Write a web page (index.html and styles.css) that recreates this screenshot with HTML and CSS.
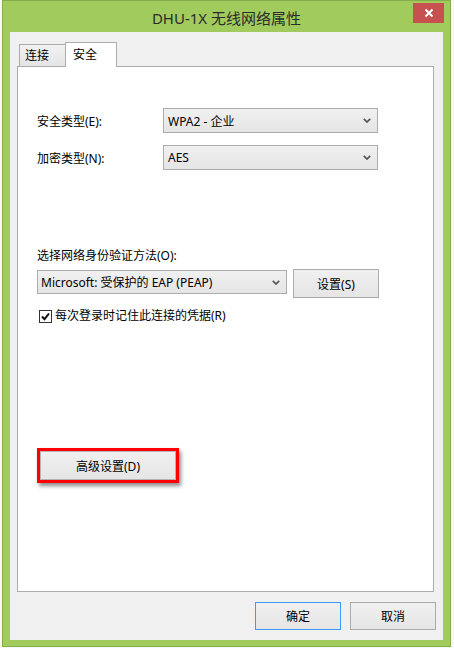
FILE: index.html
```html
<!DOCTYPE html>
<html lang="zh-CN">
<head>
<meta charset="utf-8">
<title>DHU-1X 无线网络属性</title>
<link rel="stylesheet" href="styles.css">
</head>
<body>
<div class="window">
  <div class="titlebar">
    <div class="title">DHU-1X 无线网络属性</div>
    <div class="close">
      <svg width="10" height="10" viewBox="0 0 10 10"><path d="M1.5 1.5 L8.5 8.5 M8.5 1.5 L1.5 8.5" stroke="#fff" stroke-width="2" fill="none"/></svg>
    </div>
  </div>
  <div class="client">
    <div class="tabs">
      <div class="tab">连接</div>
      <div class="tab active">安全</div>
    </div>
    <div class="panel">
      <div class="row first">
        <span class="label">安全类型(E):</span>
        <div class="select wide"><span class="val">WPA2 - 企业</span><svg class="chev" width="8" height="5" viewBox="0 0 8 5"><path d="M0.8 0.8 L4 4 L7.2 0.8" stroke="#555" stroke-width="1.7" fill="none"/></svg></div>
      </div>
      <div class="row second">
        <span class="label">加密类型(N):</span>
        <div class="select wide"><span class="val">AES</span><svg class="chev" width="8" height="5" viewBox="0 0 8 5"><path d="M0.8 0.8 L4 4 L7.2 0.8" stroke="#555" stroke-width="1.7" fill="none"/></svg></div>
      </div>
      <div class="method-label">选择网络身份验证方法(O):</div>
      <div class="method-row">
        <div class="select method"><span class="val">Microsoft: 受保护的 EAP (PEAP)</span><svg class="chev" width="8" height="5" viewBox="0 0 8 5"><path d="M0.8 0.8 L4 4 L7.2 0.8" stroke="#555" stroke-width="1.7" fill="none"/></svg></div>
        <div class="btn settings">设置(S)</div>
      </div>
      <div class="check-row">
        <svg class="checkbox" width="13" height="13" viewBox="0 0 13 13"><rect x="0.5" y="0.5" width="12" height="12" fill="#fff" stroke="#333"/><path d="M3 6.5 L5.5 9.2 L10 3.5" stroke="#111" stroke-width="2" fill="none"/></svg>
        <span>每次登录时记住此连接的凭据(R)</span>
      </div>
      <div class="btn advanced">高级设置(D)</div>
    </div>
    <div class="actions">
      <div class="btn default">确定</div>
      <div class="btn">取消</div>
    </div>
  </div>
</div>
</body>
</html>
```

FILE: styles.css
```css
html, body {
  margin: 0;
  padding: 0;
}
body {
  background: #f7f7f7;
  font-family: "Noto Sans", "Noto Sans CJK SC", sans-serif;
  font-size: 12px;
  color: #000;
}
.window {
  margin-left: 2px;
  width: 449px;
  height: 647px;
  box-sizing: border-box;
  border: 1px solid #86ad4c;
  background: #a1cb5d;
  display: flex;
  flex-direction: column;
}
.titlebar {
  height: 31px;
  display: grid;
  grid-template-columns: 1fr auto 1fr;
  align-items: start;
}
.title {
  grid-column: 2;
  font-size: 15px;
  line-height: 16px;
  margin-top: 9px;
  color: #2b2b2b;
  white-space: nowrap;
}
.close {
  grid-column: 3;
  justify-self: end;
  margin-top: 2px;
  margin-right: 6px;
  width: 31px;
  height: 20px;
  background: #c75050;
  display: flex;
  align-items: center;
  justify-content: center;
}
.client {
  margin: 0 7px;
  height: 608px;
  background: #f0f0f0;
  box-sizing: border-box;
  padding-top: 10px;
  display: flex;
  flex-direction: column;
}
.tabs {
  display: flex;
  align-items: flex-end;
  margin-left: 9px;
  height: 24px;
  position: relative;
  z-index: 1;
}
.tab {
  box-sizing: border-box;
  width: 47px;
  height: 22px;
  border: 1px solid #acacac;
  border-bottom: none;
  background: linear-gradient(#f2f2f2, #e4e4e4);
  padding-left: 5px;
  line-height: 21px;
}
.tab.active {
  width: 52px;
  height: 25px;
  margin-left: -1px;
  margin-bottom: -1px;
  background: #fff;
  padding-left: 7px;
  line-height: 23px;
}
.panel {
  margin-left: 7px;
  width: 417px;
  height: 526px;
  box-sizing: border-box;
  border: 1px solid #acacac;
  background: #fff;
  padding-left: 19px;
  display: flex;
  flex-direction: column;
  align-items: flex-start;
}
.row {
  display: flex;
  align-items: center;
  height: 25px;
}
.row.first { margin-top: 41px; }
.row.second { margin-top: 12px; }
.label {
  width: 126px;
}
.select {
  box-sizing: border-box;
  height: 25px;
  border: 1px solid #acacac;
  background: linear-gradient(#f0f0f0, #e5e5e5);
  display: flex;
  align-items: center;
  justify-content: space-between;
  padding: 0 6px 0 4px;
}
.select.wide { width: 215px; }
.select.method { width: 250px; height: 24px; margin-top: 1px; padding-left: 3px; }
.val { white-space: nowrap; }
.method-label {
  margin-top: 78px;
  line-height: 16px;
}
.method-row {
  display: flex;
  align-items: flex-start;
  gap: 6px;
  margin-top: 5px;
}
.btn {
  box-sizing: border-box;
  width: 86px;
  height: 28px;
  border: 1px solid #acacac;
  background: linear-gradient(#f0f0f0, #e5e5e5);
  display: flex;
  align-items: center;
  justify-content: center;
}
.btn.settings { height: 29px; }
.check-row {
  display: flex;
  align-items: center;
  gap: 3px;
  margin-top: 10px;
  margin-left: 2px;
  line-height: 16px;
}
.checkbox { flex: none; }
.btn.advanced {
  width: 142px;
  height: 35px;
  margin-top: 124px;
  border: 3px solid #f00;
  box-shadow: inset 0 0 0 1px #b4b4b4, 2px 3px 4px rgba(0, 0, 0, 0.45);
}
.actions {
  display: flex;
  justify-content: flex-end;
  gap: 9px;
  margin-top: 10px;
  margin-right: 7px;
}
.btn.default {
  border-color: #3c9bff;
}
```
